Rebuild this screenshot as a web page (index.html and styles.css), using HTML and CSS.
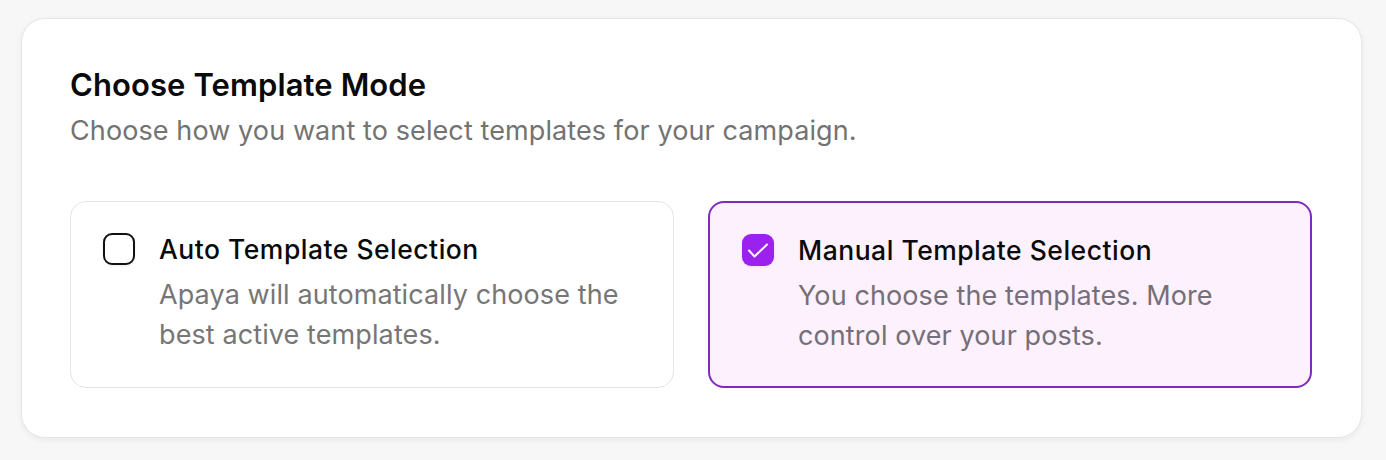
FILE: index.html
```html
<!DOCTYPE html>
<html lang="en">
<head>
<meta charset="utf-8">
<title>Choose Template Mode</title>
<link rel="stylesheet" href="styles.css">
</head>
<body>
<section class="panel">
  <h2 class="panel-title">Choose Template Mode</h2>
  <p class="panel-sub">Choose how you want to select templates for your campaign.</p>
  <div class="options">
    <label class="option">
      <span class="box"></span>
      <span class="text">
        <span class="opt-title">Auto Template Selection</span>
        <span class="opt-desc">Apaya will automatically choose the best active templates.</span>
      </span>
    </label>
    <label class="option selected">
      <span class="box checked">
        <svg viewBox="0 0 32 32" width="32" height="32" fill="none" stroke="#fff" stroke-width="2" stroke-linecap="round" stroke-linejoin="round"><path d="M7 16.5l5.5 6L25 10.5"/></svg>
      </span>
      <span class="text">
        <span class="opt-title">Manual Template Selection</span>
        <span class="opt-desc">You choose the templates. More control over your posts.</span>
      </span>
    </label>
  </div>
</section>
</body>
</html>
```
FILE: styles.css
```css
* { box-sizing: border-box; }
html, body { margin: 0; }
body {
  background: #f7f7f7;
  font-family: Inter, "Noto Sans", "Liberation Sans", sans-serif;
  padding: 18px 24px 22px 21px;
}
.panel {
  background: #fff;
  border: 1px solid #e6e6e6;
  border-radius: 24px;
  box-shadow: 0 2px 6px rgba(0,0,0,0.06);
  padding: 47px 49px 49px 48px;
  height: 420px;
}
.panel-title {
  margin: 0;
  font-size: 31px;
  font-weight: 600;
  line-height: 38px;
  color: #0a0a0a;
  letter-spacing: 0.1px;
}
.panel-sub {
  margin: 10px 0 0;
  font-size: 27px;
  line-height: 34px;
  color: #737373;
  letter-spacing: 0.1px;
}
.options {
  margin-top: 53px;
  display: grid;
  grid-template-columns: 1fr 1fr;
  gap: 34px;
}
.option {
  display: flex;
  gap: 24px;
  align-items: flex-start;
  border: 1.5px solid #e5e5e5;
  border-radius: 16px;
  padding: 30px 30px 30px 32px;
  background: #fff;
  height: 187px;
}
.option.selected {
  border: 2px solid #8329bd;
  background: #fcf1fd;
}
.box {
  flex: none;
  width: 32px;
  height: 32px;
  margin-top: 1px;
  border: 2.2px solid #111;
  border-radius: 9px;
  display: flex;
  align-items: center;
  justify-content: center;
  box-shadow: 0 1px 3px rgba(0,0,0,0.08);
}
.box.checked {
  border: none;
  background: #9b22ee;
}
.text { display: flex; flex-direction: column; }
.opt-title {
  font-size: 26.5px;
  font-weight: 500;
  line-height: 34px;
  color: #0a0a0a;
  letter-spacing: 0.5px;
}
.opt-desc {
  margin-top: 9px;
  font-size: 27px;
  line-height: 40px;
  color: #767676;
  letter-spacing: 0.1px;
}
.option.selected .opt-desc { color: #756f78; }
```
